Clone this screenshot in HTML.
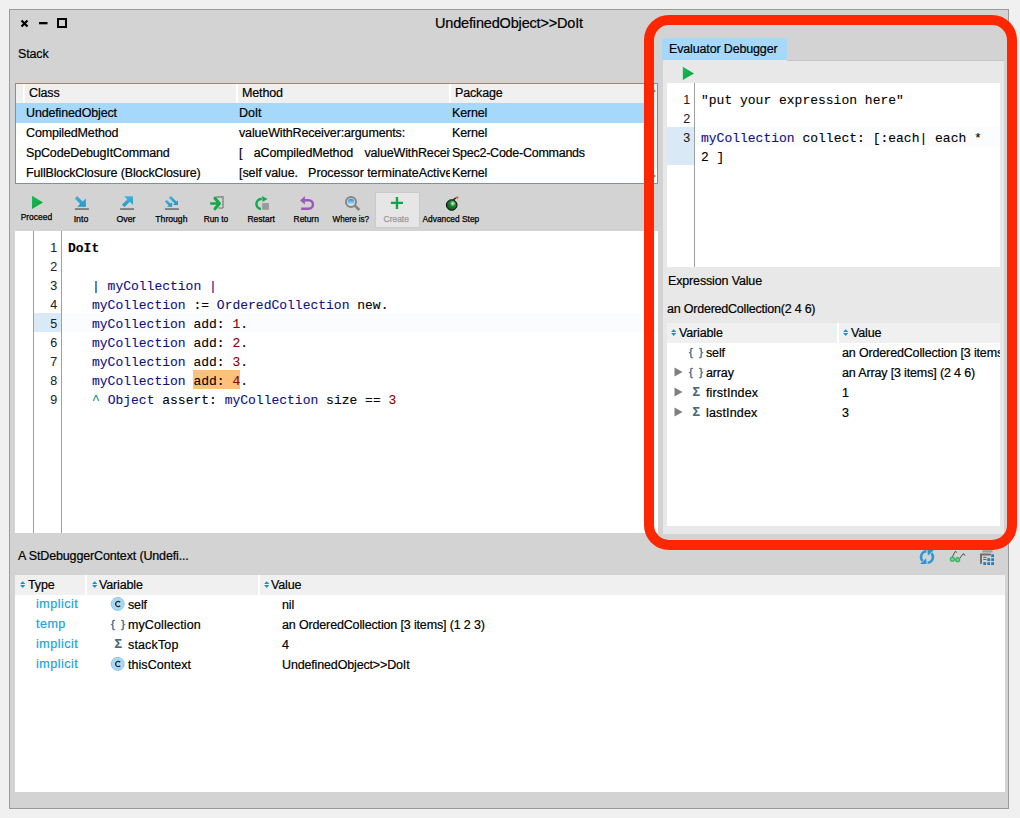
<!DOCTYPE html>
<html>
<head>
<meta charset="utf-8">
<title>UndefinedObject>>DoIt</title>
<style>
html,body{margin:0;padding:0;}
body{width:1020px;height:818px;overflow:hidden;background:#f0f0f0;position:relative;
  font-family:"Liberation Sans",sans-serif;font-size:12.5px;color:#000;letter-spacing:-0.15px;-webkit-text-stroke:0.2px;}
.abs{position:absolute;}
#win{position:absolute;left:9px;top:9px;width:1000px;height:800px;box-sizing:border-box;border:1px solid #9a9a9a;background:#d3d3d3;}
.t{position:absolute;white-space:pre;line-height:20px;height:20px;margin-top:1px;}
.hdr{position:absolute;background:#f0f0f0;height:20px;}
.mono{font-family:"Liberation Mono",monospace;font-size:13px;letter-spacing:0;}
.ln{position:absolute;white-space:pre;line-height:19px;height:19px;text-align:right;color:#222;margin-top:1px;margin-left:-1px;-webkit-text-stroke:0.05px;letter-spacing:-0.3px;}
.cl{position:absolute;white-space:pre;line-height:19px;height:19px;font-family:"Liberation Mono",monospace;font-size:13px;letter-spacing:0;-webkit-text-stroke:0.1px;}
.v{color:#101082;}
.g{color:#101082;}
.n{color:#8b0000;}
.r{color:#008b8b;}
.lbl{position:absolute;white-space:pre;font-size:8.8px;-webkit-text-stroke:0.25px;line-height:12px;height:12px;text-align:center;letter-spacing:0;margin-top:1px;}
.lbl span{display:inline-block;transform-origin:50% 50%;}
.cy{color:#10a4e4;letter-spacing:0.5px;}
.br{color:#44697a;letter-spacing:1.7px;font-size:11px;-webkit-text-stroke:0.4px;}
.sg{color:#44697a;font-size:12.5px;font-weight:bold;letter-spacing:0;}
</style>
</head>
<body>
<div id="win"></div>

<!-- window buttons -->
<svg class="abs" style="left:18px;top:16px" width="54" height="14" viewBox="18 16 54 14">
  <path d="M21.5 20.5 L27.5 26.5 M27.5 20.5 L21.5 26.5" stroke="#000" stroke-width="2.2" fill="none"/>
  <rect x="39" y="22" width="8.5" height="2.3" fill="#000"/>
  <rect x="58" y="19" width="8" height="8" fill="none" stroke="#000" stroke-width="2"/>
</svg>

<div class="t" id="title" style="left:359px;top:12px;width:300px;text-align:center;font-size:14.5px;letter-spacing:-0.17px;">UndefinedObject&gt;&gt;DoIt</div>
<div class="t" id="stack" style="left:18px;top:43px;">Stack</div>

<!-- stack table -->
<div class="abs" id="stk" style="left:15px;top:83px;width:643px;height:101px;box-sizing:border-box;border:1px solid #4a9fe0;background:#fff;overflow:hidden;">
  <div class="hdr" style="height:19px;left:0;top:0;width:7px;"></div>
  <div class="hdr" style="height:19px;left:9px;top:0;width:211px;"></div>
  <div class="hdr" style="height:19px;left:222px;top:0;width:211px;"></div>
  <div class="hdr" style="height:19px;left:435px;top:0;width:211px;"></div>
  <div class="abs" style="left:0;top:19px;width:641px;height:20px;background:#a5d8fb;"></div>
</div>
<div class="abs" style="left:645px;top:96px;width:12px;height:73px;background:#efefef;"></div>
<svg class="abs" style="left:645px;top:84px" width="12" height="99" viewBox="0 0 12 99"><path d="M7 3.5 L11 7 L7 10.5 Z M7 88.5 L11 92 L7 95.5 Z" fill="#8a8a8a"/></svg>
<div class="t" style="left:29px;top:82px;">Class</div>
<div class="t" style="left:242px;top:82px;">Method</div>
<div class="t" style="left:455px;top:82px;">Package</div>

<div class="t" style="left:26px;top:102px;">UndefinedObject</div>
<div class="t" style="left:239px;top:102px;">DoIt</div>
<div class="t" style="left:452px;top:102px;">Kernel</div>

<div class="t" style="left:26px;top:122px;">CompiledMethod</div>
<div class="t" style="left:239px;top:122px;">valueWithReceiver:arguments:</div>
<div class="t" style="left:452px;top:122px;">Kernel</div>

<div class="t" style="left:26px;top:142px;">SpCodeDebugItCommand</div>
<div class="t" style="left:239px;top:142px;width:211px;overflow:hidden;word-spacing:0.5px;">[   aCompiledMethod   valueWithReceiver: self arguments: #() ]</div>
<div class="t" style="left:452px;top:142px;letter-spacing:-0.25px;">Spec2-Code-Commands</div>

<div class="t" style="left:26px;top:162px;">FullBlockClosure (BlockClosure)</div>
<div class="t" style="left:239px;top:162px;width:211px;overflow:hidden;letter-spacing:-0.07px;">[self value.   Processor terminateActive]</div>
<div class="t" style="left:452px;top:162px;">Kernel</div>

<!-- toolbar -->
<div class="abs" style="left:375px;top:192px;width:45px;height:36px;box-sizing:border-box;background:#e6e6e6;border:1px solid #cacaca;"></div>
<svg class="abs" id="tbicons" style="left:0;top:190px" width="520" height="30" viewBox="0 190 520 30">
  <defs>
    <linearGradient id="gb" x1="0" y1="0" x2="0" y2="1"><stop offset="0" stop-color="#46b2da"/><stop offset="1" stop-color="#1f97c9"/></linearGradient>
    <linearGradient id="gg" x1="0" y1="0" x2="1" y2="1"><stop offset="0" stop-color="#17bd55"/><stop offset="1" stop-color="#0d9e40"/></linearGradient>
    <linearGradient id="gl" x1="0" y1="0" x2="0" y2="1"><stop offset="0" stop-color="#2f86d6"/><stop offset="0.55" stop-color="#7fc0e8"/><stop offset="1" stop-color="#e6f1f6"/></linearGradient>
    <radialGradient id="gbomb" cx="0.6" cy="0.36" r="0.7"><stop offset="0" stop-color="#f4fff4"/><stop offset="0.14" stop-color="#8fcf9a"/><stop offset="0.4" stop-color="#1c8430"/><stop offset="1" stop-color="#0a4c16"/></radialGradient>
  </defs>
  <!-- proceed -->
  <path d="M32 195.8 L43 202.4 L32 209.1 Z" fill="url(#gg)"/>
  <!-- into -->
  <path d="M74.8 198.5 L77.2 196.1 L82.6 201.5 L85.9 198.2 L85.9 206.8 L77.2 206.8 L80.2 203.9 Z" fill="url(#gb)"/>
  <rect x="74.9" y="208.1" width="14" height="1.9" fill="#808080"/>
  <!-- over -->
  <path d="M121.95 204.7 L127.25 199.4 L124.2 196.3 L133 196.3 L133 204.7 L129.75 201.85 L124.6 207 Z" fill="url(#gb)"/>
  <rect x="120.1" y="208.1" width="13.9" height="1.9" fill="#808080"/>
  <!-- through -->
  <path d="M164.8 201.6 L166.9 199.9 L170.55 203.55 L172.2 202.3 L172.2 206.8 L166.9 206.8 L168.65 205.45 Z" fill="url(#gb)"/>
  <path d="M168.9 197.8 L171 196 L176.5 201.5 L178 200.2 L178 204.9 L173 204.9 L174.6 203.5 Z" fill="url(#gb)"/>
  <rect x="164.9" y="208.1" width="14" height="1.9" fill="#808080"/>
  <!-- run to -->
  <path d="M216.3 197 L223 197 L223 208.2 L218.3 208.2" fill="none" stroke="#8c8c8c" stroke-width="1.8" stroke-dasharray="1.2 0.3"/>
  <rect x="210.1" y="202.3" width="8.4" height="2.4" rx="0.6" fill="#10ab47"/>
  <path d="M215 198.2 L219.4 203.5 L215 208.8" fill="none" stroke="#10ab47" stroke-width="3" stroke-linecap="round" stroke-linejoin="round"/>
  <!-- restart -->
  <path d="M261.8 199 A5 5 0 1 0 261 209" fill="none" stroke="#10ab47" stroke-width="2.4"/>
  <path d="M262 196 L267.5 198.9 L262.7 201.8 Z" fill="#10ab47"/>
  <rect x="262.2" y="203.1" width="6.7" height="6.7" fill="#999"/>
  <!-- return -->
  <path d="M300.1 200.6 L304.9 196.1 L304.9 204.4 Z" fill="#9b59b6"/>
  <path d="M304.5 200.2 L308.7 200.2 A4.25 4.25 0 0 1 308.7 208.7 L301.1 208.7" fill="none" stroke="#9b59b6" stroke-width="2.5"/>
  <!-- where is -->
  <circle cx="351" cy="202" r="5" fill="#d4d8dc" stroke="#858585" stroke-width="2"/><circle cx="351" cy="202" r="3.2" fill="url(#gl)"/>
  <path d="M355.4 206.2 L358.4 209.1" stroke="#858585" stroke-width="2.6" stroke-linecap="square"/>
  <!-- create -->
  <path d="M397 196.9 L397 208.9 M390.9 202.9 L403 202.9" stroke="#10a643" stroke-width="2.4"/>
  <!-- advanced step -->
  <path d="M453.4 199.9 L455.9 197.8" stroke="#222" stroke-width="1.5"/>
  <circle cx="451.7" cy="205" r="5.3" fill="url(#gbomb)" stroke="#0a0f0a" stroke-width="1"/>
  <path d="M457.4 195.6 L457.4 199.6 M455.6 197.6 L459.4 197.6" stroke="#f4c35a" stroke-width="0.7"/>
  <circle cx="457.2" cy="197.6" r="1.1" fill="#e8421a"/>
</svg>
<div class="lbl" style="left:11px;top:210px;width:50px;"><span style="transform:scaleX(0.96)">Proceed</span></div>
<div class="lbl" style="left:56px;top:212px;width:50px;"><span style="transform:scaleX(1.0)">Into</span></div>
<div class="lbl" style="left:101px;top:212px;width:50px;"><span style="transform:scaleX(1.0)">Over</span></div>
<div class="lbl" style="left:146px;top:212px;width:50px;"><span style="transform:scaleX(0.98)">Through</span></div>
<div class="lbl" style="left:191px;top:212px;width:50px;"><span style="transform:scaleX(0.95)">Run to</span></div>
<div class="lbl" style="left:236px;top:212px;width:50px;"><span style="transform:scaleX(0.97)">Restart</span></div>
<div class="lbl" style="left:281px;top:212px;width:50px;"><span style="transform:scaleX(0.96)">Return</span></div>
<div class="lbl" style="left:326px;top:212px;width:50px;"><span style="transform:scaleX(0.92)">Where is?</span></div>
<div class="lbl" style="left:371px;top:212px;width:50px;color:#9a9a9a;"><span style="transform:scaleX(0.96)">Create</span></div>
<div class="lbl" style="left:411px;top:212px;width:80px;"><span style="transform:scaleX(0.95)">Advanced Step</span></div>

<!-- code pane -->
<div class="abs" id="code" style="left:15px;top:231px;width:643px;height:302px;background:#fff;overflow:hidden;">
  <div class="abs" style="left:18px;top:0;width:1px;height:302px;background:#a0a0a0;"></div>
  <div class="abs" style="left:46px;top:0;width:1px;height:302px;background:#a0a0a0;"></div>
  <div class="abs" style="left:19px;top:82px;width:27px;height:19px;background:#d9e9f6;"></div>
  <div class="abs" style="left:47px;top:82px;width:596px;height:19px;background:#fbfcfe;"></div>
  <div class="abs" style="left:178px;top:139px;width:47px;height:19px;background:#ffc07c;"></div>
</div>
<div id="lns">
<div class="ln" style="left:35px;width:23px;top:238px;">1</div>
<div class="ln" style="left:35px;width:23px;top:257px;">2</div>
<div class="ln" style="left:35px;width:23px;top:276px;">3</div>
<div class="ln" style="left:35px;width:23px;top:295px;">4</div>
<div class="ln" style="left:35px;width:23px;top:314px;">5</div>
<div class="ln" style="left:35px;width:23px;top:333px;">6</div>
<div class="ln" style="left:35px;width:23px;top:352px;">7</div>
<div class="ln" style="left:35px;width:23px;top:371px;">8</div>
<div class="ln" style="left:35px;width:23px;top:390px;">9</div>
</div>
<div id="src">
<div class="cl" style="left:68px;top:239px;font-weight:bold;">DoIt</div>
<div class="cl" style="left:92px;top:277px;"><span class="v">| myCollection |</span></div>
<div class="cl" style="left:92px;top:296px;"><span class="v">myCollection</span> := <span class="g">OrderedCollection</span> new.</div>
<div class="cl" style="left:92px;top:315px;"><span class="v">myCollection</span> add: <span class="n">1</span>.</div>
<div class="cl" style="left:92px;top:334px;"><span class="v">myCollection</span> add: <span class="n">2</span>.</div>
<div class="cl" style="left:92px;top:353px;"><span class="v">myCollection</span> add: <span class="n">3</span>.</div>
<div class="cl" style="left:92px;top:372px;"><span class="v">myCollection</span> add: <span class="n">4</span>.</div>
<div class="cl" style="left:92px;top:391px;"><span class="r">^</span> <span class="g">Object</span> assert: <span class="v">myCollection</span> size == <span class="n">3</span></div>
</div>

<!-- context label + bottom table -->
<div class="t" style="left:18px;top:545px;">A StDebuggerContext (Undefi...</div>

<div class="abs" id="btm" style="left:15px;top:575px;width:990px;height:217px;background:#fff;overflow:hidden;">
  <div class="hdr" style="left:0;top:0;width:70px;"></div>
  <div class="hdr" style="left:72px;top:0;width:171px;"></div>
  <div class="hdr" style="left:245px;top:0;width:745px;"></div>
</div>
<svg class="abs sort" style="left:19.5px;top:581px" width="6" height="8" viewBox="0 0 6 8"><path d="M2.7 0.3 L5.3 3.1 L0.1 3.1 Z M2.7 6.9 L5.3 4.1 L0.1 4.1 Z" fill="#1f8fc4"/></svg>
<div class="t" style="left:28px;top:574px;">Type</div>
<svg class="abs sort" style="left:91.5px;top:581px" width="6" height="8" viewBox="0 0 6 8"><path d="M2.7 0.3 L5.3 3.1 L0.1 3.1 Z M2.7 6.9 L5.3 4.1 L0.1 4.1 Z" fill="#1f8fc4"/></svg>
<div class="t" style="left:99px;top:574px;">Variable</div>
<svg class="abs sort" style="left:263.5px;top:581px" width="6" height="8" viewBox="0 0 6 8"><path d="M2.7 0.3 L5.3 3.1 L0.1 3.1 Z M2.7 6.9 L5.3 4.1 L0.1 4.1 Z" fill="#1f8fc4"/></svg>
<div class="t" style="left:271px;top:574px;">Value</div>

<div class="t cy" style="left:36px;top:593px;">implicit</div>
<div class="t cy" style="left:36px;top:613px;">temp</div>
<div class="t cy" style="left:36px;top:633px;">implicit</div>
<div class="t cy" style="left:36px;top:653px;">implicit</div>

<svg class="abs" style="left:110px;top:596px" width="16" height="16" viewBox="110 596 16 16"><circle cx="117.7" cy="603.9" r="6.5" fill="#a9d8f6" stroke="#7fc1ec" stroke-width="0.9"/><path d="M120.2 602.3 A2.6 2.6 0 1 0 120.2 605.7" fill="none" stroke="#2b2b2b" stroke-width="1.35"/></svg>
<div class="t br" style="left:111px;top:612.5px;">{ }</div>
<div class="t sg" style="left:114.5px;top:633px;">Σ</div>
<svg class="abs" style="left:110px;top:656px" width="16" height="16" viewBox="110 596 16 16"><circle cx="117.7" cy="603.9" r="6.5" fill="#a9d8f6" stroke="#7fc1ec" stroke-width="0.9"/><path d="M120.2 602.3 A2.6 2.6 0 1 0 120.2 605.7" fill="none" stroke="#2b2b2b" stroke-width="1.35"/></svg>

<div class="t" style="left:128px;top:594px;">self</div>
<div class="t" style="left:128px;top:614px;letter-spacing:0.1px;">myCollection</div>
<div class="t" style="left:128px;top:634px;letter-spacing:0.15px;">stackTop</div>
<div class="t" style="left:128px;top:654px;letter-spacing:0.05px;">thisContext</div>

<div class="t" style="left:282px;top:594px;">nil</div>
<div class="t" style="left:282px;top:614px;">an OrderedCollection [3 items] (1 2 3)</div>
<div class="t" style="left:282px;top:634px;">4</div>
<div class="t" style="left:282px;top:654px;">UndefinedObject&gt;&gt;DoIt</div>

<!-- right pane -->
<div class="abs" style="left:662px;top:38px;width:125px;height:22px;background:#a5d8fb;"></div>
<div class="t" style="left:669px;top:38px;">Evaluator Debugger</div>
<div class="abs" id="rp" style="left:663px;top:60px;width:341px;height:474px;background:#e8e8e8;"></div>
<div class="abs" style="left:787px;top:60px;width:217px;height:1px;background:#c6c6c6;"></div>
<svg class="abs" style="left:681px;top:65px" width="16" height="16" viewBox="681 65 16 16"><defs><linearGradient id="gg2" x1="0" y1="0" x2="1" y2="1"><stop offset="0" stop-color="#17bd55"/><stop offset="1" stop-color="#0d9e40"/></linearGradient></defs><path d="M682.8 66.8 L694 73.5 L682.8 80 Z" fill="url(#gg2)"/></svg>
<div class="abs" id="rcode" style="left:667px;top:83px;width:333px;height:184px;background:#fff;overflow:hidden;">
  <div class="abs" style="left:27px;top:0;width:1px;height:184px;background:#a0a0a0;"></div>
  <div class="abs" style="left:0;top:44px;width:27px;height:38px;background:#d9e9f6;"></div>
  <div class="abs" style="left:28px;top:44px;width:305px;height:19px;background:#fbfcfe;"></div>
</div>
<div class="ln" style="left:670px;width:21px;top:90px;">1</div>
<div class="ln" style="left:670px;width:21px;top:109px;">2</div>
<div class="ln" style="left:670px;width:21px;top:128px;">3</div>
<div class="cl" style="left:701px;top:91px;">"put your expression here"</div>
<div class="cl" style="left:701px;top:129px;"><span class="v">myCollection</span> collect: [:each| each *</div>
<div class="cl" style="left:701px;top:148px;">2 ]</div>

<div class="t" style="left:668px;top:270px;">Expression Value</div>
<div class="t" style="left:667px;top:298px;letter-spacing:-0.22px;">an OrderedCollection(2 4 6)</div>

<div class="abs" id="rtbl" style="left:667px;top:323px;width:333px;height:203px;background:#fff;overflow:hidden;">
  <div class="hdr" style="left:0;top:0;width:170px;"></div>
  <div class="hdr" style="left:172px;top:0;width:161px;"></div>
</div>
<svg class="abs sort" style="left:671px;top:329px" width="6" height="8" viewBox="0 0 6 8"><path d="M2.7 0.3 L5.3 3.1 L0.1 3.1 Z M2.7 6.9 L5.3 4.1 L0.1 4.1 Z" fill="#1f8fc4"/></svg>
<div class="t" style="left:679px;top:322px;">Variable</div>
<svg class="abs sort" style="left:843px;top:329px" width="6" height="8" viewBox="0 0 6 8"><path d="M2.7 0.3 L5.3 3.1 L0.1 3.1 Z M2.7 6.9 L5.3 4.1 L0.1 4.1 Z" fill="#1f8fc4"/></svg>
<div class="t" style="left:851px;top:322px;">Value</div>

<div class="t br" style="left:689px;top:340.5px;">{ }</div>
<div class="t br" style="left:689px;top:360.5px;">{ }</div>
<div class="t sg" style="left:692.5px;top:381px;">Σ</div>
<div class="t sg" style="left:692.5px;top:401px;">Σ</div>
<svg class="abs" style="left:674px;top:367px" width="9" height="10" viewBox="0 0 9 10"><path d="M0.5 0.5 L8.5 5 L0.5 9.5 Z" fill="#808080"/></svg>
<svg class="abs" style="left:674px;top:387px" width="9" height="10" viewBox="0 0 9 10"><path d="M0.5 0.5 L8.5 5 L0.5 9.5 Z" fill="#808080"/></svg>
<svg class="abs" style="left:674px;top:407px" width="9" height="10" viewBox="0 0 9 10"><path d="M0.5 0.5 L8.5 5 L0.5 9.5 Z" fill="#808080"/></svg>
<div class="t" style="left:706px;top:342px;">self</div>
<div class="t" style="left:706px;top:362px;">array</div>
<div class="t" style="left:706px;top:382px;letter-spacing:0.15px;">firstIndex</div>
<div class="t" style="left:706px;top:402px;letter-spacing:0.15px;">lastIndex</div>
<div class="t" style="left:842px;top:342px;width:158px;overflow:hidden;">an OrderedCollection [3 items] (2 4 6)</div>
<div class="t" style="left:842px;top:362px;">an Array [3 items] (2 4 6)</div>
<div class="t" style="left:842px;top:382px;">1</div>
<div class="t" style="left:842px;top:402px;">3</div>

<!-- bottom-right icons -->
<svg class="abs" style="left:915px;top:546px" width="85" height="22" viewBox="915 546 85 22">
  <!-- refresh -->
  <path d="M926.4 551.3 A5.7 5.7 0 0 0 922.6 560.9" fill="none" stroke="#2f97d5" stroke-width="2.5"/>
  <path d="M920 563.9 L926.6 563.9 L926.2 558.3 Z" fill="#2f97d5"/>
  <path d="M927.6 562.7 A5.7 5.7 0 0 0 931.4 553.1" fill="none" stroke="#2f97d5" stroke-width="2.5"/>
  <path d="M934 550.1 L927.4 550.1 L927.8 555.7 Z" fill="#2f97d5"/>
  <!-- glasses -->
  <path d="M952.4 557 L955 551.6 Q955.6 550.9 956.9 552.6" fill="none" stroke="#444" stroke-width="0.9"/>
  <path d="M959.9 558.2 L963 553.9 Q964 553.2 965 555.7" fill="none" stroke="#444" stroke-width="0.9"/>
  <circle cx="952.4" cy="559.2" r="2.6" fill="#35b75e"/>
  <circle cx="957.7" cy="559.7" r="2.6" fill="#35b75e"/>
  <circle cx="952.4" cy="559.2" r="1.2" fill="#7fd69a"/>
  <circle cx="957.7" cy="559.7" r="1.2" fill="#7fd69a"/>
  <!-- table -->
  <rect x="982.4" y="550.3" width="10.1" height="2.2" fill="#9c9c9c"/>
  <path d="M981 563.7 L981 554.4 L990.8 554.4" fill="none" stroke="#6e6e6e" stroke-width="2"/>
  <rect x="983.3" y="556.9" width="3.1" height="0.9" fill="#4c5a4c"/>
  <rect x="983.3" y="559.1" width="3.1" height="0.9" fill="#4c5a4c"/>
  <g fill="#1a7fc9">
    <rect x="991.2" y="554.3" width="2.8" height="2.8"/>
    <rect x="987.3" y="558.2" width="2.8" height="2.8"/>
    <rect x="991.2" y="558.2" width="2.8" height="2.8"/>
    <rect x="983.3" y="562.2" width="2.8" height="2.8"/>
    <rect x="987.3" y="562.2" width="2.8" height="2.8"/>
    <rect x="991.2" y="562.2" width="2.8" height="2.8"/>
  </g>
</svg>

<!-- red highlight -->
<svg class="abs" style="left:0;top:0;pointer-events:none" width="1020" height="818" viewBox="0 0 1020 818"><rect x="649" y="20" width="363" height="525" rx="20" ry="20" fill="none" stroke="#ff2600" stroke-width="10"/></svg>
</body>
</html>
